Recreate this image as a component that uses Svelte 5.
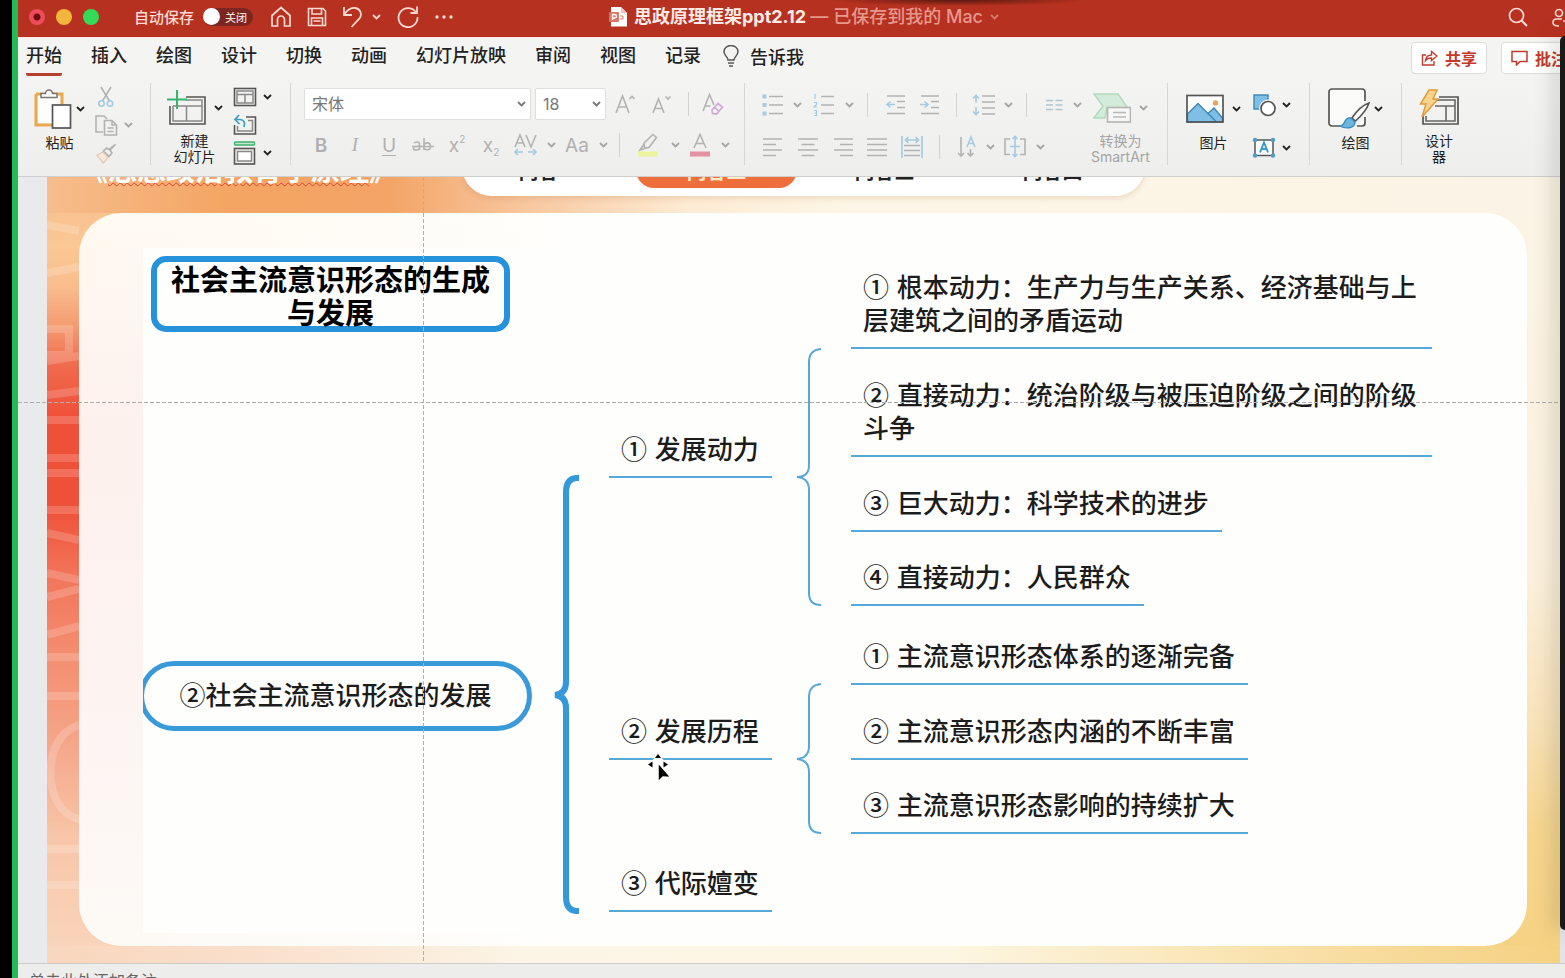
<script lang="ts">
  type Icon = { w: number; h: number; body: string }
  type Leaf = { x: number; y: number; mark: string; text: string }

  const tabs = ['开始', '插入', '绘图', '设计', '切换', '动画', '幻灯片放映', '审阅', '视图', '记录']
  const sections = ['内容一', '内容二', '内容三', '内容四']
  let activeTab = $state('开始')
  let activeSection = $state('内容二')
  let autosave = $state(false)

  // positions on the slide picture
  const topics: Leaf[] = [
    { x: 466, y: 183, mark: '①', text: '发展动力' },
    { x: 466, y: 465, mark: '②', text: '发展历程' },
    { x: 466, y: 617, mark: '③', text: '代际嬗变' },
    { x: 708, y: 21, mark: '①', text: '根本动力：生产力与生产关系、经济基础与上层建筑之间的矛盾运动' },
    { x: 708, y: 129, mark: '②', text: '直接动力：统治阶级与被压迫阶级之间的阶级斗争' },
    { x: 708, y: 237, mark: '③', text: '巨大动力：科学技术的进步' },
    { x: 708, y: 311, mark: '④', text: '直接动力：人民群众' },
    { x: 708, y: 390, mark: '①', text: '主流意识形态体系的逐渐完备' },
    { x: 708, y: 465, mark: '②', text: '主流意识形态内涵的不断丰富' },
    { x: 708, y: 539, mark: '③', text: '主流意识形态影响的持续扩大' },
  ]

  const grey = 'stroke="#b3b3b3" stroke-width="1.6"'
  const blue = 'stroke="#a3cbe2" stroke-width="1.6"'
  const dark = 'stroke="#555" stroke-width="1.6"'

  const icons: Record<string, Icon> = {
    chevron: { w: 9, h: 6, body: '<path d="M1 1l3.5 3.5L8 1" stroke="currentColor" stroke-width="1.8"/>' },
    home: { w: 22, h: 22, body: '<path d="M2 9.5L11 1.5l9 8V20h-5.5v-6.5a3.5 3.5 0 0 0-7 0V20H2z" stroke="currentColor" stroke-width="1.7"/>' },
    save: { w: 20, h: 20, body: '<path d="M1.5 1.5h14.5l2.5 2.500v14.500h-17z M5 1.500v5.500h9.500v-5.500 M4.500 18.500v-7.500h11v7.500 M6.500 14h7" stroke="currentColor" stroke-width="1.6"/>' },
    undo: { w: 20, h: 22, body: '<path d="M2 1v8h8 M2 9C5 4 9 1.500 13 2c6 .8 7.500 7.500 4 11l-7.500 8" stroke="currentColor" stroke-width="1.8"/>' },
    redo: { w: 24, h: 22, body: '<path d="M20.300 7A9.500 9.500 0 1 0 21.500 11 M14.500 7h6.500V.5" stroke="currentColor" stroke-width="1.8"/>' },
    more: { w: 18, h: 4, body: '<g fill="currentColor"><circle cx="2" cy="2" r="1.700"/><circle cx="9" cy="2" r="1.700"/><circle cx="16" cy="2" r="1.700"/></g>' },
    file: { w: 18, h: 20, body: '<path d="M2 0h10l6 6v13.500H2z" fill="#fff"/><path d="M12 0v6h6" fill="#f0c4bc"/><rect y="5" width="10" height="10" rx="1" fill="#d9786a"/><path d="M3.500 13V7.500h2.200a1.700 1.700 0 0 1 0 3.500H3.500" stroke="#fff" stroke-width="1.300"/><path d="M11 9h3v3h-3" stroke="#d9786a"/>' },
    search: { w: 20, h: 20, body: '<circle cx="8.500" cy="8.500" r="7" stroke="currentColor" stroke-width="1.700"/><path d="M13.500 13.500l5.500 5.500" stroke="currentColor" stroke-width="2"/>' },
    people: { w: 20, h: 20, body: '<circle cx="7" cy="6" r="3.500" stroke="currentColor" stroke-width="1.600"/><path d="M10 12H4.500C2 12 1 13.500 1 15.500S2.500 19 7 19M15 10v8M11 14h8" stroke="currentColor" stroke-width="1.600"/>' },
    bulb: { w: 16, h: 22, body: '<path d="M5 15c0-3-4-4.500-4-8.500a7 6 0 0 1 14 0C15 10.500 11 12 11 15z M5 18h6 M6 21h4" stroke="#555" stroke-width="1.500"/>' },
    share: { w: 17, h: 16, body: '<path d="M5 5H1.500v10H13v-4 M4.500 10.500c.5-4 3-5.500 6-5.500V1.500L16 6l-5.500 4.500V8c-3 0-4.500.5-6 2.500z" stroke="currentColor" stroke-width="1.400"/>' },
    comment: { w: 17, h: 16, body: '<path d="M1 1.500h15v10H9l-3.500 3.500v-3.500H1z" stroke="currentColor" stroke-width="1.500"/>' },
    paste: { w: 38, h: 42, body: '<path d="M2 6h26v10M2 6v31h18" stroke="#e9a74e" stroke-width="3"/><path d="M4 8h22v27H4z" fill="#fdfdfc"/><path d="M7 9V5.500h4.500a3.500 3.500 0 0 1 7 0H23V9.500H7z" fill="#fff" stroke="#777" stroke-width="1.500"/><rect x="18.500" y="17" width="18" height="23" fill="#fff" stroke="#555" stroke-width="1.700"/>' },
    cut: { w: 24, h: 22, body: `<path d="M7 1l8.500 14M17 1L8.500 15" ${grey}/><circle cx="7.500" cy="17.500" r="2.700" ${blue}/><circle cx="16" cy="17.500" r="2.700" ${blue}/>` },
    copy: { w: 24, h: 22, body: `<path d="M9 18H2V2h8l3 3" ${grey}/><path d="M10.500 6.500H18l4.500 4.500v10h-12z M18 6.500V11h4.500 M13.500 14h6M13.500 17.500h6" ${grey}/>` },
    brush: { w: 24, h: 22, body: `<path d="M21.500 2.500L16 8l2 3-3 3.500-5.500-5.500 3-3 2.500 1.500z" ${grey}/><path d="M8.500 10l5.500 5.500-4.500 5.500L3 13.500z" fill="#faeade" stroke="#e8c9ad" stroke-width="1.300"/>` },
    newslide: { w: 40, h: 38, body: `<path d="M20 8h19v27H4V17" ${dark}/><path d="M20 11h16v21H7V17M7 17h29M20.500 17v15" stroke="#888" stroke-width="1.500"/><path d="M11 1v19M1 10.500h20" stroke="#36b56c" stroke-width="2"/>` },
    layout: { w: 24, h: 20, body: `<rect x="1.500" y="1.500" width="21" height="17" ${dark}/><path d="M4 4h16v12H4zM4 7.500h16M12 7.500V16" stroke="#888" stroke-width="1.500"/>` },
    reset: { w: 24, h: 22, body: `<path d="M13 3h9.500v17h-21V11" ${dark}/><path d="M15 6.500h4.500V17H4.500v-5" stroke="#888" stroke-width="1.500"/><path d="M6 1L2 5.500 6.500 10M2 5.500h5c4 0 5.500 3 4 7.500" stroke="#3d9cc9" stroke-width="1.700"/>` },
    section: { w: 24, h: 24, body: `<rect x="1.500" y="1" width="20" height="3" rx="1" fill="#bfe8cf" stroke="#3db26e" stroke-width="1.400"/><rect x="1.500" y="7.500" width="20" height="15.500" ${dark}/><rect x="4.500" y="10.500" width="14" height="9.500" fill="#fff" stroke="#888" stroke-width="1.500"/>` },
    grow: { w: 24, h: 22, body: `<path d="M2 20L8.500 3 15 20M4.500 14h8M15.500 6L18 3.500 20.500 6" ${grey}/>` },
    shrink: { w: 24, h: 22, body: `<path d="M4 20L9.500 6 15 20M6 15.500h7M16.500 3.500L19 6l2.500-2.500" ${grey}/>` },
    clear: { w: 24, h: 24, body: `<path d="M2 19L8.500 2.500 13 13M4.500 14h5" ${grey}/><path d="M11 18l6-6.500 4.500 3.500-6 7-4-.500z M13.500 15l4 4" stroke="#d0a9d8" stroke-width="1.700"/>` },
    strike: { w: 24, h: 20, body: `<path d="M8.500 15V9c0-2.500-4.500-2.500-5.500-.8M8.500 11c-3.500 0-6 .7-6 2.500 0 2.200 4.500 2 6 0M13 3v12M13 10c1-3 6.500-3 6.500 1.200 0 4.500-5.500 4.500-6.500 1.500M1 11.500h22" ${grey}/>` },
    spacing: { w: 24, h: 24, body: `<path d="M1 14L6 2l5 12M3 10h6M12 2l5 12 5-12" ${grey}/><path d="M1 19h8M14 19h8M4 16l-3 3 3 3M19 16l3 3-3 3" ${blue}/>` },
    highlight: { w: 24, h: 24, body: `<path d="M8 10L17 1.500l3.500 3L13 14.500 8.500 15z M8.500 10.500L4 17l8-2.500" ${grey}/><rect x="2" y="18.500" width="20" height="5" fill="#ecf59d"/>` },
    fontcolor: { w: 24, h: 24, body: `<path d="M6 15L12 1.500 18 15M8 10.500h8" ${grey}/><rect x="2" y="18.500" width="20" height="5" fill="#e391a3"/>` },
    bullets: { w: 24, h: 24, body: `<path d="M8 3.500h14M8 12h14M8 20.500h14" ${grey}/><g fill="#a3cbe2"><rect x="1.500" y="1.500" width="4" height="4"/><rect x="1.500" y="10" width="4" height="4"/><rect x="1.500" y="18.500" width="4" height="4"/></g>` },
    numbers: { w: 24, h: 24, body: `<path d="M9 3.500h13M9 12h13M9 20.500h13" ${grey}/><path d="M3 1v5M2 9.500h2.500v2L2 14h3M2 17.500h2.500v5H2M2.500 20h2" stroke="#a3cbe2" stroke-width="1.200"/>` },
    outdent: { w: 22, h: 22, body: `<path d="M2 2h18M12 7.500h8M12 13.500h8M2 19.500h18" ${grey}/><path d="M2 10.500h8M5.500 7.500l-3.500 3 3.500 3" ${blue}/>` },
    indent: { w: 22, h: 22, body: `<path d="M2 2h18M12 7.500h8M12 13.500h8M2 19.500h18" ${grey}/><path d="M1 10.500h8M5.500 7.500l3.500 3-3.500 3" ${blue}/>` },
    linespace: { w: 24, h: 24, body: `<path d="M10 3h13M10 9h13M10 15h13M10 21h13" ${grey}/><path d="M4 2.500v7M4 14v7.500M1 5.500l3-3 3 3M1 18.500l3 3 3-3" ${blue}/>` },
    columns: { w: 20, h: 12, body: `<path d="M2 1.500h7M2 6h7M2 10.500h7M11.500 1.500h7M11.500 6h7M11.500 10.500h7" stroke="#b3c6d0" stroke-width="1.300"/>` },
    left: { w: 22, h: 20, body: `<path d="M1 2h19M1 7.500h13M1 13h19M1 18.500h13" ${grey}/>` },
    center: { w: 22, h: 20, body: `<path d="M1 2h20M4.500 7.500h13M1 13h20M4.500 18.500h13" ${grey}/>` },
    right: { w: 22, h: 20, body: `<path d="M2 2h19M8 7.500h13M2 13h19M8 18.500h13" ${grey}/>` },
    justify: { w: 22, h: 20, body: `<path d="M1 2h20M1 7.500h20M1 13h20M1 18.500h20" ${grey}/>` },
    distribute: { w: 24, h: 24, body: `<path d="M4 10.500h16M4 15.500h16M4 20.500h16" ${grey}/><path d="M2 1v22M22 1v22M5 5h14M8.500 2l-3 3 3 3M15.500 2l3 3-3 3" ${blue}/>` },
    textdir: { w: 22, h: 24, body: `<path d="M5 2v19M2 18l3 3 3-3M14.500 14v7M11.500 18l3 3 3-3" ${grey}/><path d="M11 12l4-10 4 10M12.500 8.500h5" ${blue}/>` },
    aligntext: { w: 24, h: 24, body: `<path d="M7 4H2v15.500h5M17 4h5v15.500h-5" ${grey}/><path d="M7 11.500h10M12 1.500v20M9.500 4L12 1.500 14.500 4M9.500 19l2.500 2.500 2.500-2.500" ${blue}/>` },
    smartart: { w: 38, h: 32, body: '<path d="M1 2h24l9 13-4 1H14l-2 10H1l9-12z" fill="#d3ecd9" stroke="#b2d9bd" stroke-width="1.500"/><rect x="14.500" y="15.500" width="23" height="14.500" fill="#f7f7f6" stroke="#b3b3b3" stroke-width="1.600"/><path d="M20 20.500h13M20 25h13" stroke="#b9b9b9" stroke-width="1.300"/>' },
    picture: { w: 38, h: 30, body: '<rect x="1" y="1.500" width="36" height="26.500" fill="#fff"/><path d="M1.500 20L12 9.500l10 10 6-5.500L36.500 24v4h-35z" fill="#7fbfe6" stroke="#3b87b5" stroke-width="1.400"/><path d="M22 19.500l8 8" stroke="#3b87b5" stroke-width="1.400"/><circle cx="29.500" cy="9" r="2.700" fill="#e5a85a"/><rect x="1" y="1.500" width="36" height="26.500" stroke="#555" stroke-width="1.700"/>' },
    shapes: { w: 24, h: 24, body: '<rect x="2" y="2" width="14" height="14" fill="#7fbfe6" stroke="#3b87b5" stroke-width="1.400"/><circle cx="16" cy="15.500" r="9" fill="#f2f2f1"/><circle cx="16" cy="15.500" r="7" fill="#fff" stroke="#555" stroke-width="1.700"/>' },
    textbox: { w: 24, h: 22, body: '<rect x="3" y="3" width="18" height="15.500" fill="#fff" stroke="#555" stroke-width="1.500"/><g fill="#4d9cc9"><circle cx="3" cy="3" r="2.200"/><circle cx="21" cy="3" r="2.200"/><circle cx="3" cy="18.500" r="2.200"/><circle cx="21" cy="18.500" r="2.200"/></g><path d="M8 15.500l4-10 4 10M9.500 12h5" stroke="#3d9cc9" stroke-width="2"/>' },
    draw: { w: 42, h: 42, body: '<path d="M12 38H4a3 3 0 0 1-3-3V4a3 3 0 0 1 3-3h30a3 3 0 0 1 3 3v9M37 29v6a3 3 0 0 1-3 3h-5" fill="#fbfbfa" stroke="#555" stroke-width="1.700"/><path d="M41 15c-6 2-13 9-17 15l3.500 3C33 28 39 21 41 15z" fill="#fff" stroke="#555" stroke-width="1.600"/><path d="M23 30c-5-1-6 3-7 5-1 2-3 3-4 3 5 3 15 3 15-4z" fill="#6fb4e0" stroke="#3b87b5" stroke-width="1.300"/>' },
    designer: { w: 40, h: 38, body: '<path d="M20 8h19v27H4V27" stroke="#555" stroke-width="1.700"/><path d="M18 11h18v21H7v-5M16 17h20M27 17v15" stroke="#666" stroke-width="1.600"/><path d="M10 1h8l-4 9h5L3 28l4-13H1.500z" fill="#f8d48c" stroke="#e09b3d" stroke-width="1.500"/>' },
    cursor: { w: 28, h: 32, body: '<path d="M12 0l7 9 6 3-6 4-7-3-7 4-5-5 6-4z" fill="#fff"/><g fill="#000"><path d="M12 1l3 4H9zM2 11.500l4.500-3v6zM22 11.500l-4.500-3v6z"/></g><path d="M12 9.500V29l5-5 8 .5z" fill="#000" stroke="#fff" stroke-width="1.500"/>' },
  }
</script>

{#snippet icon(name: string)}
  <svg class="icon" width={icons[name].w} height={icons[name].h} viewBox="0 0 {icons[name].w} {icons[name].h}" fill="none" aria-hidden="true">
    {@html icons[name].body}
  </svg>
{/snippet}

{#snippet tool(name: string, label: string)}
  <button class="tool" aria-label={label}>{@render icon(name)}</button>
{/snippet}

{#snippet glyph(text: string, label: string, cls: string)}
  <button class="tool glyph {cls}" aria-label={label}>{text}</button>
{/snippet}

{#snippet chevron(label: string)}
  <button class="tool" aria-label="{label}选项">{@render icon('chevron')}</button>
{/snippet}

<div class="screen">
  <div class="window">
    <header class="titlebar">
      <div class="title-left">
        <div class="lights">
          <button class="light close" aria-label="关闭窗口"></button>
          <button class="light minimize" aria-label="最小化"></button>
          <button class="light zoom" aria-label="缩放"></button>
        </div>
        <label class="autosave">
          <span>自动保存</span>
          <input type="checkbox" role="switch" bind:checked={autosave} />
          <span class="switch"><i></i>{autosave ? '打开' : '关闭'}</span>
        </label>
        <div class="quick">
          {@render tool('home', '主页')}
          {@render tool('save', '保存')}
          <div class="undo">
            {@render tool('undo', '撤消')}
            {@render chevron('撤消')}
          </div>
          {@render tool('redo', '重做')}
          {@render tool('more', '更多')}
        </div>
      </div>
      <h1 class="doc">
        {@render icon('file')}
        <span>思政原理框架ppt2.12 <em>— 已保存到我的 Mac</em></span>
        <button class="tool faded" aria-label="文档选项">{@render icon('chevron')}</button>
      </h1>
      <div class="title-right">
        {@render tool('search', '搜索')}
        {@render tool('people', '共享对象')}
      </div>
    </header>

    <div class="tabrow">
      <nav class="tabs">
        {#each tabs as t}
          <button class="tab" class:active={t === activeTab} onclick={() => (activeTab = t)}>{t}</button>
        {/each}
      </nav>
      <button class="tell">{@render icon('bulb')}告诉我</button>
      <div class="actions">
        <button class="action">{@render icon('share')}共享</button>
        <button class="action">{@render icon('comment')}批注</button>
      </div>
    </div>

    <div class="ribbon">
      <section class="group clipboard">
        <button class="big">
          <span class="big-icon tight">{@render icon('paste')}{@render icon('chevron')}</span>
          <span>粘贴</span>
        </button>
        <div class="stack muted">
          {@render tool('cut', '剪切')}<span></span>
          {@render tool('copy', '复制')}{@render chevron('复制')}
          {@render tool('brush', '格式刷')}
        </div>
      </section>

      <section class="group slides">
        <button class="big">
          <span class="big-icon">{@render icon('newslide')}{@render icon('chevron')}</span>
          <span>新建<br />幻灯片</span>
        </button>
        <div class="stack">
          {@render tool('layout', '版式')}{@render chevron('版式')}
          {@render tool('reset', '重置')}<span></span>
          {@render tool('section', '节')}{@render chevron('节')}
        </div>
      </section>

      <section class="group font muted">
        <div class="font-top">
          <div class="picker family">
            <select aria-label="字体"><option>宋体</option></select>
            {@render icon('chevron')}
          </div>
          <div class="picker">
            <select aria-label="字号"><option>18</option></select>
            {@render icon('chevron')}
          </div>
          {@render tool('grow', '增大字号')}
          {@render tool('shrink', '减小字号')}
          <span class="sep"></span>
          {@render tool('clear', '清除格式')}
        </div>
        <div class="font-bottom">
          {@render glyph('B', '加粗', 'bold')}
          {@render glyph('I', '倾斜', 'italic')}
          {@render glyph('U', '下划线', 'underline')}
          {@render tool('strike', '删除线')}
          <button class="tool glyph" aria-label="上标">x<sup>2</sup></button>
          <button class="tool glyph" aria-label="下标">x<sub>2</sub></button>
          {@render tool('spacing', '字符间距')}
          {@render chevron('字符间距')}
          {@render glyph('Aa', '更改大小写', '')}
          {@render chevron('更改大小写')}
          <span class="sep"></span>
          {@render tool('highlight', '突出显示')}
          {@render chevron('突出显示')}
          {@render tool('fontcolor', '字体颜色')}
          {@render chevron('字体颜色')}
        </div>
      </section>

      <section class="group paragraph muted">
        <div>
          <div class="para-top">
            {@render tool('bullets', '项目符号')}
            {@render chevron('项目符号')}
            {@render tool('numbers', '编号')}
            {@render chevron('编号')}
            <span class="sep"></span>
            {@render tool('outdent', '减少缩进')}
            {@render tool('indent', '增加缩进')}
            <span class="sep"></span>
            {@render tool('linespace', '行距')}
            {@render chevron('行距')}
            <span class="sep"></span>
            {@render tool('columns', '分栏')}
            {@render chevron('分栏')}
          </div>
          <div class="para-bottom">
            {@render tool('left', '左对齐')}
            {@render tool('center', '居中')}
            {@render tool('right', '右对齐')}
            {@render tool('justify', '两端对齐')}
            {@render tool('distribute', '分散对齐')}
            <span class="sep"></span>
            {@render tool('textdir', '文字方向')}
            {@render chevron('文字方向')}
            {@render tool('aligntext', '对齐文本')}
            {@render chevron('对齐文本')}
          </div>
        </div>
        <button class="big">
          <span class="big-icon">{@render icon('smartart')}{@render icon('chevron')}</span>
          <span>转换为<br />SmartArt</span>
        </button>
      </section>

      <section class="group insert">
        <button class="big">
          <span class="big-icon">{@render icon('picture')}{@render icon('chevron')}</span>
          <span>图片</span>
        </button>
        <div class="stack two">
          {@render tool('shapes', '形状')}{@render chevron('形状')}
          {@render tool('textbox', '文本框')}{@render chevron('文本框')}
        </div>
      </section>

      <section class="group insert">
        <button class="big">
          <span class="big-icon tight">{@render icon('draw')}{@render icon('chevron')}</span>
          <span>绘图</span>
        </button>
      </section>

      <section class="group designer">
        <button class="big">
          <span class="big-icon">{@render icon('designer')}</span>
          <span>设计<br />器</span>
        </button>
      </section>
    </div>

    <main class="stage">
      <div class="slide">
        <svg class="watermark" width="32" height="786" fill="none" stroke="#fff" stroke-opacity="0.18" stroke-width="8" aria-hidden="true">
          <path d="M0 48l32 6M0 96l32-6M0 152h22v26H0M0 184l32-5M0 218l32-4M0 243h32M0 281h32M0 296h32M0 333h32M0 356l32 7M0 396l32 7M0 420l32-8M0 458l32-9M0 480h32M0 519h32M32 548C-6 558-6 634 32 642M0 672h32M0 708h32" />
        </svg>
        <div class="slide-head">
          <h2>《<span>思想政治教育学原理</span>》</h2>
          <nav class="pill">
            {#each sections as s}
              <button class:active={s === activeSection} onclick={() => (activeSection = s)}>{s}</button>
            {/each}
          </nav>
        </div>
        <div class="card">
          <div class="map">
            <svg class="braces" width="100%" height="100%" fill="none" aria-hidden="true">
              <g stroke="#3498db" stroke-width="6">
                <path d="M436 230h-3Q423 231 423 244V434Q423 446 412 447Q423 448 423 460V649Q423 662 433 663h3" />
              </g>
              <g stroke="#56a8d6" stroke-width="2">
                <path d="M678 101Q666 102 666 114V217Q666 229 654 229Q666 230 666 242V345Q666 357 678 357" />
                <path d="M678 436Q666 437 666 449V498Q666 510 654 511Q666 512 666 524V573Q666 585 678 585" />
              </g>
            </svg>
            <div class="root title">社会主流意识形态的生成与发展</div>
            <div class="root main">②社会主流意识形态的发展</div>
            {#each topics as t}
              <div class="topic" style="left: {t.x}px; top: {t.y}px"><span>{t.mark}</span> {t.text}</div>
            {/each}
          </div>
        </div>
      </div>
      <div class="guide vertical"></div>
      <div class="guide horizontal"></div>
      <div class="pointer">{@render icon('cursor')}</div>
    </main>

    <footer class="notes">单击此处添加备注</footer>
  </div>
  <div class="bezel"></div>
</div>

<style>
  :global(body) {
    background: #000;
  }
  .screen {
    position: relative;
    height: 100vh;
    padding-left: 12px;
    box-sizing: border-box;
    background: #000;
    overflow: hidden;
    font-family: Inter, 'Noto Sans CJK SC', sans-serif;
    color: #222;
  }
  .window {
    display: flex;
    flex-direction: column;
    height: 100%;
    border-left: 6px solid #22bb55;
    background: #f4f4f3;
    overflow: hidden;
  }
  button {
    border: 0;
    padding: 0;
    background: none;
    color: inherit;
    font: inherit;
    white-space: nowrap;
  }
  .icon {
    display: block;
    flex: none;
  }
  .tool {
    display: flex;
    align-items: center;
    justify-content: center;
  }

  /* title bar */
  .titlebar {
    display: grid;
    grid-template-columns: 1fr auto 1fr;
    align-items: center;
    height: 33px;
    padding: 0 0 4px 11px;
    background: radial-gradient(ellipse 130px 6px at 940px 0, #5a1810, transparent), #b73120;
    color: #fbd9d2;
  }
  .title-left,
  .lights,
  .autosave,
  .quick,
  .undo,
  .title-right {
    display: flex;
    align-items: center;
  }
  .lights {
    gap: 11px;
  }
  .light {
    width: 16px;
    height: 16px;
    border-radius: 50%;
  }
  .close {
    background: radial-gradient(circle, #6e0a12 3px, #ee4b5a 4px);
  }
  .minimize {
    background: #f3b63c;
  }
  .zoom {
    background: #33db58;
  }
  .autosave {
    position: relative;
    gap: 9px;
    margin-left: 35px;
    font-size: 15px;
    font-weight: 500;
  }
  .autosave input {
    position: absolute;
    opacity: 0;
  }
  .switch {
    display: flex;
    align-items: center;
    gap: 5px;
    width: 50px;
    height: 18px;
    border-radius: 9px;
    background: #7c2621;
    color: #f3dcd8;
    font-size: 11px;
  }
  .switch i {
    width: 17px;
    height: 17px;
    border-radius: 50%;
    background: #fff;
  }
  .quick {
    gap: 15px;
    margin-left: 17px;
  }
  .undo {
    gap: 10px;
  }
  .doc {
    display: flex;
    align-items: center;
    gap: 7px;
    margin: 0;
    padding-left: 14px;
    font-size: 18px;
    font-weight: 700;
    line-height: 24px;
    color: #fdeae6;
  }
  .doc em {
    font-style: normal;
    font-weight: 500;
    color: #e7988c;
  }
  .faded {
    color: #d97768;
  }
  .title-right {
    justify-content: flex-end;
    gap: 24px;
    margin-right: -7px;
  }

  /* tabs */
  .tabrow {
    display: flex;
    align-items: center;
    height: 40px;
    padding-left: 8px;
    border-top: 1px solid #fbe3df;
    box-sizing: border-box;
    font-size: 18px;
    font-weight: 500;
  }
  .tabs {
    display: flex;
    gap: 29px;
  }
  .tab {
    border-bottom: 3px solid transparent;
    border-radius: 2px;
    line-height: 34px;
  }
  .tab.active {
    border-color: #b5412f;
  }
  .tell {
    display: flex;
    align-items: center;
    gap: 11px;
    margin-left: 22px;
    padding-bottom: 3px;
  }
  .actions {
    display: flex;
    gap: 14px;
    margin-left: auto;
    margin-right: -12px;
  }
  .action {
    display: flex;
    align-items: center;
    gap: 7px;
    height: 32px;
    padding: 0 9px;
    border: 1px solid #dcdcdb;
    border-radius: 4px;
    background: #fff;
    color: #c23a2b;
    font-size: 16px;
    font-weight: 700;
  }

  /* ribbon */
  .ribbon {
    display: flex;
    padding: 6px 0 11px;
    border-bottom: 1px solid #cfcfce;
    background: linear-gradient(#f4f4f3, #eeeeed);
  }
  .group {
    display: flex;
    height: 82px;
    border-right: 1px solid #d6d6d5;
  }
  .group:last-child {
    border: 0;
  }
  .clipboard {
    padding: 0 17px 0 16px;
    gap: 9px;
  }
  .slides {
    padding: 0 18px 0 15px;
    gap: 10px;
  }
  .insert {
    padding: 0 18px;
    gap: 11px;
  }
  .designer {
    padding-left: 17px;
  }
  .muted {
    color: #a5a5a5;
  }
  .big {
    display: flex;
    flex-direction: column;
    align-items: center;
    font-size: 14px;
    line-height: 16px;
  }
  .big-icon {
    display: flex;
    align-items: center;
    gap: 8px;
    height: 52px;
  }
  .tight {
    gap: 4px;
  }
  .stack {
    display: grid;
    grid-template-columns: 24px 9px;
    grid-auto-rows: 28px;
    column-gap: 6px;
  }
  .two {
    grid-auto-rows: 43px;
  }
  .font {
    flex-direction: column;
    padding: 0 12px 0 13px;
  }
  .font-top,
  .font-bottom,
  .para-top,
  .para-bottom {
    display: grid;
    align-items: center;
  }
  .font-top,
  .para-top {
    height: 44px;
  }
  .font-bottom,
  .para-bottom {
    height: 40px;
  }
  .font-top {
    grid-template-columns: 231px 73px 35px 35px 20px 30px;
  }
  .font-bottom {
    grid-template-columns: repeat(6, 34px) 36px 14px 38px 14px 18px 40px 14px 36px 14px;
  }
  .paragraph {
    gap: 6px;
    padding: 0 17px 0 12px;
  }
  .para-top {
    grid-template-columns: 32px 16px 38px 12px 24px 33px 35px 18px 38px 10px 26px 30px 16px;
  }
  .para-bottom {
    grid-template-columns: 32px 38px 32px 36px 34px 20px 36px 10px 40px 10px;
  }
  .sep {
    justify-self: center;
    width: 1px;
    height: 24px;
    background: #d2d2d1;
  }
  .picker {
    display: grid;
    align-items: center;
    margin-right: 2px;
    color: #777;
  }
  .family {
    margin-right: 4px;
  }
  .picker select,
  .picker .icon {
    grid-area: 1 / 1;
  }
  .picker .icon {
    justify-self: end;
    margin-right: 5px;
    pointer-events: none;
  }
  .picker select {
    appearance: none;
    width: 100%;
    height: 32px;
    padding: 0 7px;
    border: 1px solid #dededd;
    border-radius: 2px;
    background: #fff;
    color: #777;
    font: inherit;
    font-size: 16px;
  }
  .glyph {
    font-size: 19px;
    color: #b0b0b0;
  }
  .bold {
    font-weight: 600;
  }
  .italic {
    font-family: 'Liberation Serif', serif;
    font-style: italic;
  }
  .underline {
    text-decoration: underline;
    text-underline-offset: 3px;
  }
  .glyph sup,
  .glyph sub {
    font-size: 10px;
    line-height: 0;
  }
  .glyph sup {
    align-self: flex-start;
    margin-top: 5px;
  }
  .glyph sub {
    align-self: flex-end;
    margin-bottom: 5px;
  }

  /* slide */
  .stage {
    position: relative;
    flex: 1;
    min-height: 0;
    display: flex;
    padding: 0 5px 0 29px;
    background: linear-gradient(90deg, #e9eaec, #e3e5e4);
    overflow: hidden;
  }
  .slide {
    position: relative;
    flex: 1;
    display: flex;
    flex-direction: column;
    padding: 0 33px 17px 32px;
    background:
      linear-gradient(90deg, #f7bd8d, #f4a563 180px, #f3a466 340px, #f8c8a0 480px, #fdebd3 640px, #fdf6e6 800px, #fbf4e6) top / 100% 36px no-repeat,
      linear-gradient(90deg, #f9d6bd, #fadfcb 200px, #fcf5e6 480px, #fdf6e2 900px, #f9e0a8 1250px, #f5d182) bottom / 100% 17px no-repeat,
      linear-gradient(#fbf4e6, #fbf0dc 400px, #f8e3bb 540px, #f6d690 650px, #f5d182) right / 80px 100% no-repeat,
      linear-gradient(#f7bd8d, #fbc795 70px, #f9bd8d 110px, #f49a70 150px, #f0694c 190px, #ef5038 240px, #ef5038 330px, #f2755a 400px, #f48b6e 470px, #f5a487 560px, #f8c5a8 660px, #f9d6bd);
  }
  .watermark {
    position: absolute;
    left: 0;
    top: 0;
  }
  .slide-head {
    display: flex;
    align-items: flex-end;
    justify-content: space-between;
    height: 19px;
    margin: 0 382px 17px 0;
  }
  .slide-head h2 {
    margin: 0 0 9px;
    color: #fff;
    font-size: 29px;
    line-height: 32px;
    white-space: nowrap;
  }
  .slide-head h2 span {
    text-decoration: underline wavy #e0452f 1px;
    text-underline-offset: 1px;
  }
  .pill {
    display: flex;
    align-items: flex-end;
    gap: 7px;
    padding: 10px 12px 8px 6px;
    border-radius: 30px;
    background: #fff;
    box-shadow: 0 2px 6px rgba(160, 90, 40, 0.2);
  }
  .pill button {
    width: 161px;
    padding: 14px 0 5px;
    border-radius: 18px;
    font-size: 20px;
    font-weight: 700;
    line-height: 22px;
  }
  .pill .active {
    background: #ee6f3c;
    color: #ffe9c8;
  }
  .card {
    flex: 1;
    display: flex;
    padding: 35px 78px 13px 64px;
    border-radius: 42px;
    background:
      linear-gradient(90deg, transparent 64px, #fefefc 500px),
      linear-gradient(#fffaf2, #fdf1ed 30%, #fdf3f1 60%, #fdfaf6);
  }
  .map {
    position: relative;
    flex: 1;
    background: #fefffd;
    overflow: hidden;
    font-size: 26px;
    line-height: 33px;
    font-family: 'Noto Sans CJK SC', sans-serif;
    font-weight: 500;
    color: #1c1c1c;
  }
  .braces {
    position: absolute;
    inset: 0;
  }
  .root {
    position: absolute;
    box-sizing: border-box;
    text-align: center;
  }
  .title {
    left: 8px;
    top: 8px;
    width: 359px;
    height: 76px;
    border: 6px solid #2592da;
    border-radius: 15px;
    padding: 0 4px;
    color: #000;
    font-size: 29px;
    font-weight: 700;
    line-height: 33px;
  }
  .main {
    left: -4px;
    top: 413px;
    width: 393px;
    height: 70px;
    border: 5px solid #3a99d9;
    border-radius: 35px;
    line-height: 56px;
  }
  .topic {
    position: absolute;
    max-width: 556px;
    padding: 0 13px 12px 12px;
    border-bottom: 2px solid #56a8d6;
  }
  .topic span {
    margin-right: 2px;
  }
  .guide {
    position: absolute;
    pointer-events: none;
  }
  .vertical {
    left: 405px;
    top: 0;
    bottom: 2px;
    width: 1px;
    background: repeating-linear-gradient(#b0b0ae 0 4px, transparent 4px 6px);
  }
  .horizontal {
    left: 0;
    right: 0;
    top: 225px;
    height: 1px;
    background: repeating-linear-gradient(90deg, #b0b0ae 0 4px, transparent 4px 6px);
  }
  .pointer {
    position: absolute;
    left: 628px;
    top: 576px;
  }
  .notes {
    height: 15px;
    padding: 4px 11px 0;
    border-top: 1px solid #cdcdcc;
    box-sizing: border-box;
    background: #ededec;
    color: #666;
    font-size: 16px;
    overflow: hidden;
  }
  .bezel {
    position: absolute;
    top: 36px;
    right: 0;
    width: 5px;
    height: 894px;
    border-radius: 6px 0 0 6px;
    background: #1a1a18;
    box-shadow: -2px 0 20px rgba(40, 35, 20, 0.5);
  }
</style>
